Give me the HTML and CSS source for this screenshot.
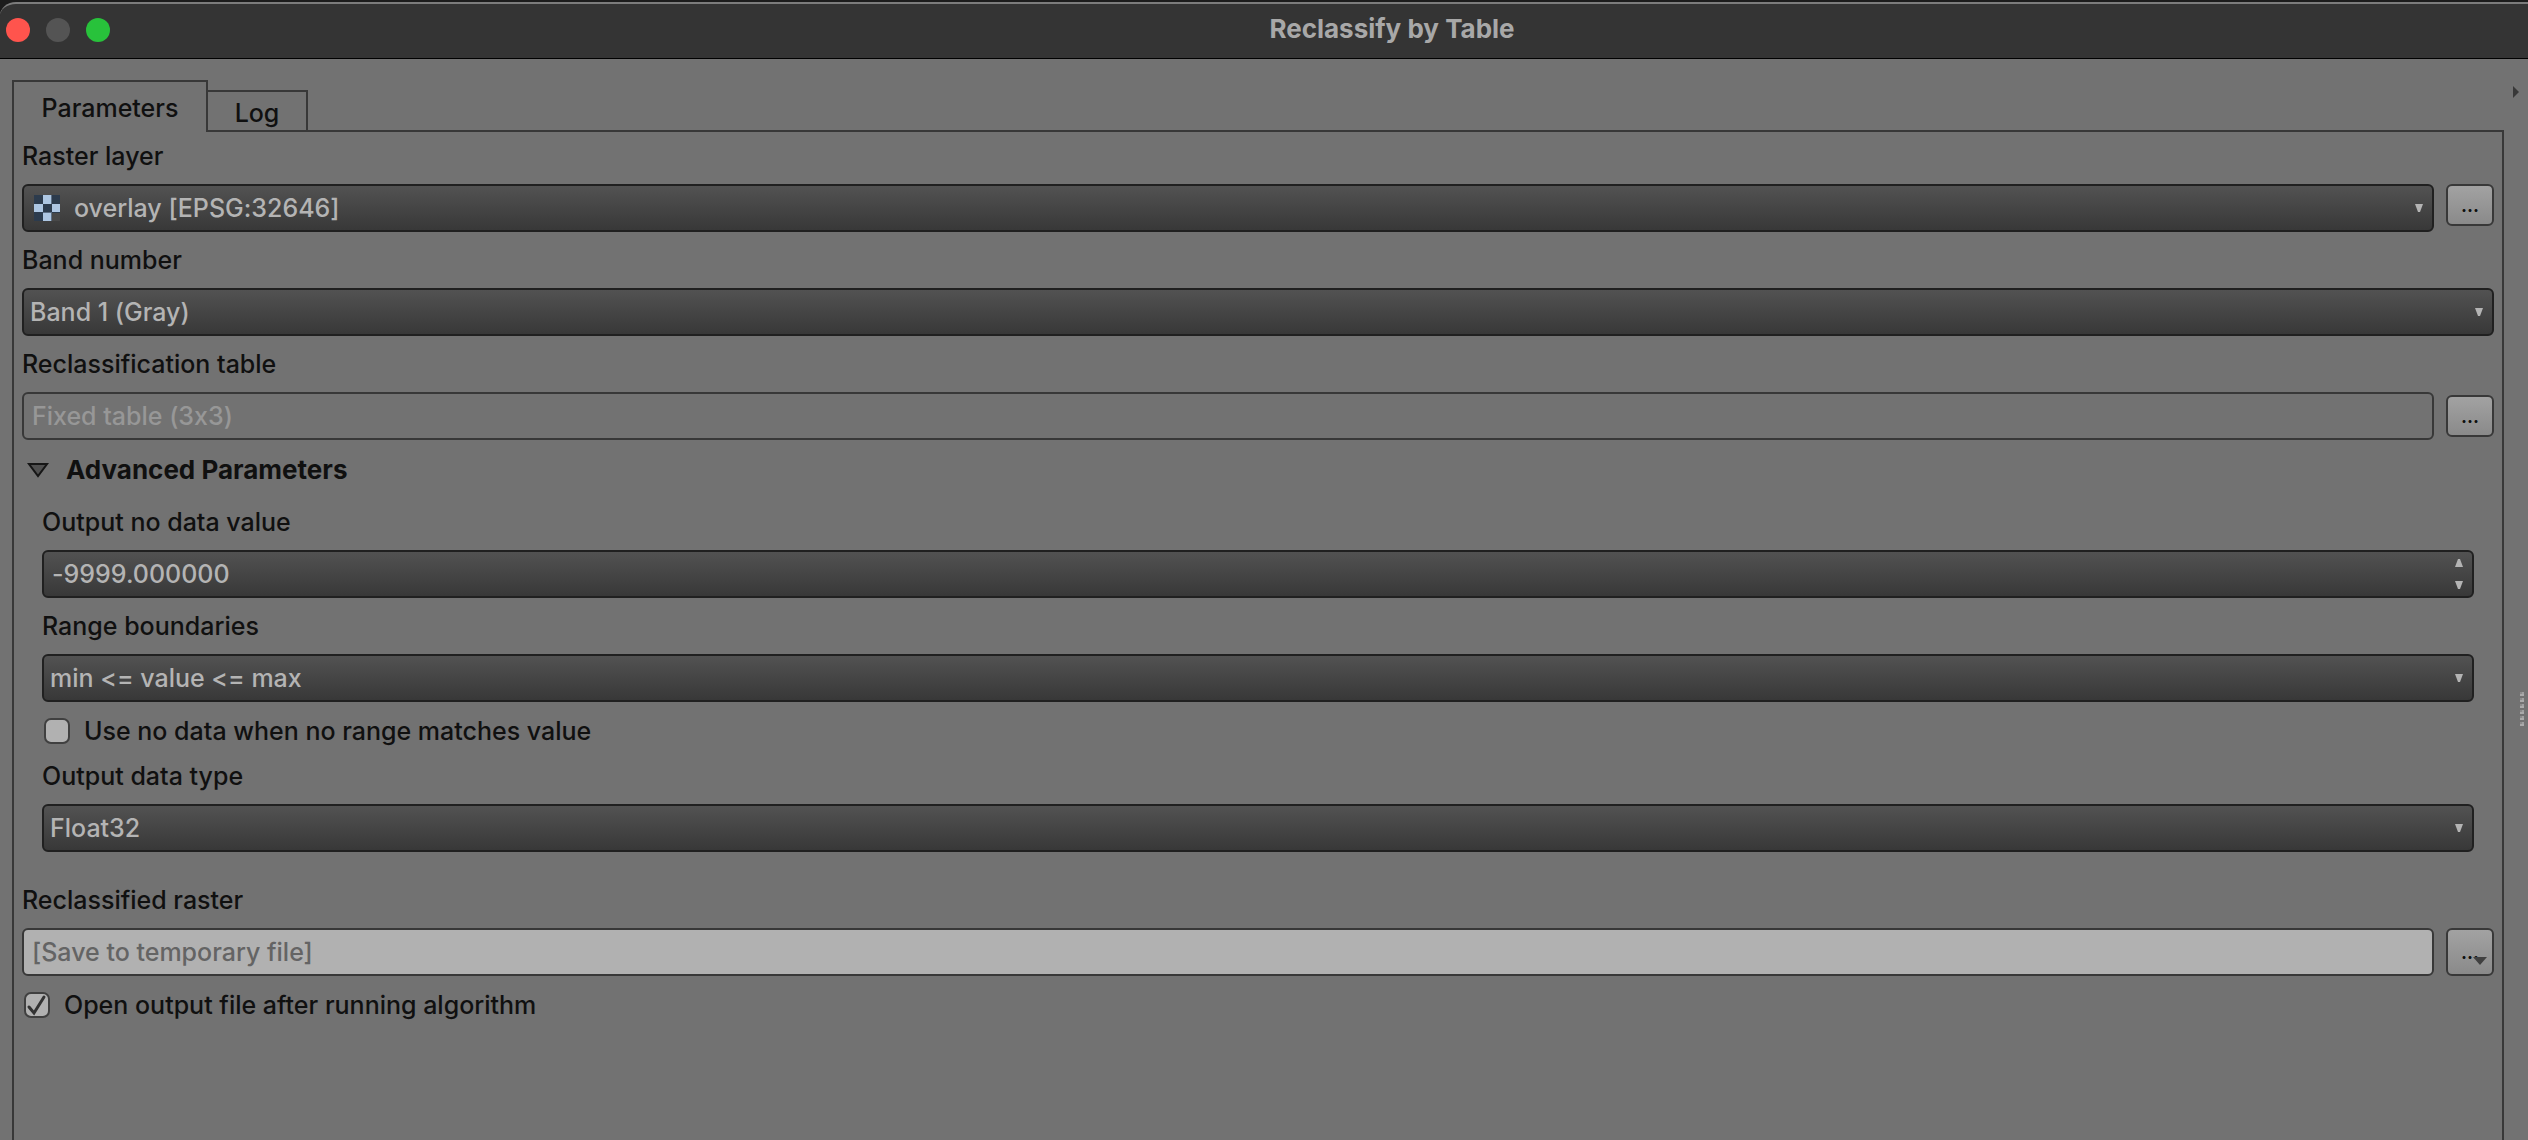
FILE: index.html
```html
<!DOCTYPE html>
<html lang="en">
<head>
<meta charset="utf-8">
<meta name="viewport" content="width=device-width, initial-scale=1">
<title>Reclassify by Table</title>
<link rel="stylesheet" href="styles.css">
</head>
<body>
<div class="window">
  <header class="titlebar">
    <div class="lights">
      <button class="light light-close" type="button" aria-label="Close"></button>
      <button class="light light-min" type="button" aria-label="Minimize" disabled></button>
      <button class="light light-zoom" type="button" aria-label="Zoom"></button>
    </div>
    <h1 class="title">Reclassify by Table</h1>
  </header>

  <div class="content">
    <main class="main">
      <div class="tabs" role="tablist">
        <button class="tab tab-active" type="button" role="tab" aria-selected="true">Parameters</button>
        <button class="tab" type="button" role="tab" aria-selected="false">Log</button>
      </div>

      <form class="pane">
        <label class="label" for="raster">Raster layer</label>
        <div class="row">
          <div class="combo">
            <svg class="raster-icon" width="26" height="26" viewBox="0 0 26 26" aria-hidden="true">
              <path fill="#2c3b4d" d="M0 0h26v26H0z"/>
              <path fill="#adc6e2" d="M9 0h8v9H9zM0 9h9v8H0zM18 9h8v8h-8zM9 18h8v8H9z"/>
              <path fill="#5d6f84" d="M17 0h1v9h-1zM17 17h1v9h-1zM9 17h9v1H9z"/>
              <path fill="#484848" d="M18 18h8v8h-8z"/>
            </svg>
            <select class="select select-icon" id="raster"><option>overlay [EPSG:32646]</option></select>
            <svg class="arrow" width="8" height="8" viewBox="0 0 8 8" aria-hidden="true"><path d="M0 0h8L5 8H3z"/></svg>
          </div>
          <button class="browse" type="button" aria-label="Browse raster layer">...</button>
        </div>

        <label class="label" for="band">Band number</label>
        <div class="combo">
          <select class="select" id="band"><option>Band 1 (Gray)</option></select>
          <svg class="arrow" width="8" height="8" viewBox="0 0 8 8" aria-hidden="true"><path d="M0 0h8L5 8H3z"/></svg>
        </div>

        <label class="label" for="table">Reclassification table</label>
        <div class="row row-center">
          <input class="field field-disabled" id="table" type="text" value="Fixed table (3x3)" disabled>
          <button class="browse" type="button" aria-label="Edit reclassification table">...</button>
        </div>

        <details class="advanced" open>
          <summary class="summary">
            <svg width="22" height="15" viewBox="0 0 22 15" aria-hidden="true"><path d="M2 1h18L11 13z" fill="#505050" stroke="#161616" stroke-width="2"/></svg>
            Advanced Parameters
          </summary>
          <div class="group">
            <label class="label" for="nodata">Output no data value</label>
            <div class="combo">
              <input class="spin" id="nodata" type="text" inputmode="decimal" value="-9999.000000">
              <div class="steps">
                <button class="step" type="button" aria-label="Increase"><svg class="arrow" width="8" height="8" viewBox="0 0 8 8"><path d="M0 8h8L5 0H3z"/></svg></button>
                <button class="step" type="button" aria-label="Decrease"><svg class="arrow" width="8" height="8" viewBox="0 0 8 8"><path d="M0 0h8L5 8H3z"/></svg></button>
              </div>
            </div>

            <label class="label" for="range">Range boundaries</label>
            <div class="combo">
              <select class="select" id="range"><option>min &lt;= value &lt;= max</option></select>
              <svg class="arrow" width="8" height="8" viewBox="0 0 8 8" aria-hidden="true"><path d="M0 0h8L5 8H3z"/></svg>
            </div>

            <div class="check">
              <input class="box" id="missing" type="checkbox">
              <label for="missing">Use no data when no range matches value</label>
            </div>

            <label class="label" for="dtype">Output data type</label>
            <div class="combo">
              <select class="select" id="dtype"><option>Float32</option></select>
              <svg class="arrow" width="8" height="8" viewBox="0 0 8 8" aria-hidden="true"><path d="M0 0h8L5 8H3z"/></svg>
            </div>
          </div>
        </details>

        <label class="label label-output" for="output">Reclassified raster</label>
        <div class="row">
          <input class="field" id="output" type="text" placeholder="[Save to temporary file]">
          <button class="browse browse-menu" type="button" aria-label="Choose output">...<svg class="menu-arrow" width="14" height="8" viewBox="0 0 14 8" aria-hidden="true"><path d="M0 0h14L7 8z"/></svg></button>
        </div>

        <div class="check">
          <input class="box" id="open" type="checkbox" checked>
          <label for="open">Open output file after running algorithm</label>
        </div>
      </form>
    </main>

    <aside class="splitter">
      <button class="collapse" type="button" aria-label="Show help"><svg width="6" height="12" viewBox="0 0 6 12"><path d="M0 0l6 6-6 6z"/></svg></button>
      <div class="grip"><i></i><i></i><i></i><i></i><i></i><i></i></div>
    </aside>
  </div>
</div>
</body>
</html>
```
FILE: styles.css
```css
* { box-sizing: border-box; }

body {
  margin: 0;
  background: #1c1c1c;
  color: #101010;
  font: 500 25px/32px Inter, "Liberation Sans", sans-serif;
  font-feature-settings: "calt" 0;
}

button, input, select {
  margin: 0;
  padding: 0;
  border: 0;
  background: none;
  color: inherit;
  font: inherit;
  font-feature-settings: inherit;
}

svg { display: block; flex: none; }

.window {
  display: flex;
  flex-direction: column;
  min-height: 100vh;
  padding-top: 2px;
}

.titlebar {
  display: flex;
  align-items: center;
  height: 57px;
  padding: 0 0 2px 6px;
  border-top: 2px solid #7c7c7c;
  border-bottom: 1px solid #000;
  border-top-left-radius: 16px 14px;
  background: #343434;
}

.lights { display: flex; gap: 16px; }
.light { width: 24px; height: 24px; border-radius: 50%; }
.light-close { background: #ff544d; }
.light-min { background: #545454; }
.light-zoom { background: #28c23b; }

.title {
  flex: 1;
  margin: 0;
  padding: 0 0 2px 146px;
  color: #a8a8a8;
  font-size: 26px;
  font-weight: 700;
  line-height: 32px;
  text-align: center;
}

.content {
  display: flex;
  flex: 1;
  padding: 21px 0 0 12px;
  background: #727272;
}

.main { display: flex; flex: 1; flex-direction: column; min-width: 0; }

.tabs { display: flex; align-items: flex-end; }

.tab {
  min-width: 100px;
  height: 40px;
  padding: 4px 16px 0;
  border: 2px solid #383838;
  border-bottom: 0;
  border-left: 0;
}

.tab-active {
  position: relative;
  min-width: 196px;
  height: 52px;
  margin-bottom: -2px;
  padding-top: 2px;
  border-left: 2px solid #383838;
  background: #727272;
}

.pane {
  display: flex;
  flex: 1;
  flex-direction: column;
  gap: 12px;
  padding: 8px 8px 24px;
  border: 2px solid #383838;
  border-bottom: 0;
}

.label { align-self: flex-start; height: 32px; }
.label-output { margin-top: 20px; }

.row { display: flex; align-items: flex-start; gap: 12px; }
.row-center { align-items: center; }

.combo {
  display: flex;
  flex: 1;
  align-items: center;
  min-width: 0;
  height: 48px;
  padding: 0 9px 0 6px;
  border: 2px solid #202020;
  border-radius: 6px;
  background: linear-gradient(#525252, #383838);
  color: #b4b4b4;
}

.pane > .combo, .group > .combo { flex: none; }

.select { flex: 1; min-width: 0; height: 44px; appearance: none; outline: 0; }
.select-icon { padding-left: 14px; }
.raster-icon { margin-left: 4px; }
.arrow { fill: #b4b4b4; }

.spin { flex: 1; min-width: 0; height: 44px; padding-left: 2px; outline: 0; }
.steps { display: flex; flex-direction: column; gap: 14px; }
.step { display: block; height: 8px; }

.field {
  flex: 1;
  min-width: 0;
  height: 48px;
  padding: 0 8px;
  border: 2px solid #383838;
  border-radius: 6px;
  background: #b1b1b1;
}

.field::placeholder { color: #646464; opacity: 1; }
.field-disabled { background: none; color: #979797; }

.browse {
  width: 48px;
  height: 42px;
  padding-top: 2px;
  border: 2px solid #383838;
  border-radius: 6px;
  background: linear-gradient(#a2a2a2, #8a8a8a);
  font-size: 18px;
  font-weight: 700;
}

.browse-menu { position: relative; height: 48px; }
.menu-arrow { position: absolute; right: 5px; bottom: 9px; fill: #404040; }

.summary {
  display: flex;
  align-items: center;
  gap: 17px;
  height: 36px;
  padding-left: 5px;
  font-size: 26px;
  font-weight: 700;
  list-style: none;
}

.group {
  display: flex;
  flex-direction: column;
  gap: 12px;
  padding: 18px 20px 0;
}

.check { display: flex; align-items: center; gap: 14px; height: 34px; padding-left: 2px; }

.box {
  width: 26px;
  height: 26px;
  border: 2px solid #404040;
  border-radius: 7px;
  background: #b1b1b1;
  appearance: none;
}

.box:checked {
  background: #b1b1b1 url("data:image/svg+xml,%3Csvg xmlns='http://www.w3.org/2000/svg' viewBox='0 0 22 22'%3E%3Cpath d='M3 13l5 6L18 3' fill='none' stroke='%23333' stroke-width='3' stroke-linecap='round'/%3E%3C/svg%3E") center / 22px 22px no-repeat;
}

.splitter {
  display: flex;
  flex-direction: column;
  gap: 594px;
  width: 24px;
  padding: 6px 4px 0 9px;
}

.collapse { align-self: flex-start; height: 12px; fill: #383838; }
.grip { display: flex; flex-direction: column; align-self: flex-end; gap: 2px; }
.grip i { width: 4px; height: 4px; background: linear-gradient(#a0a0a0, #a0a0a0) 2px 0 / 2px 2px no-repeat, linear-gradient(#aaa, #aaa) 0 2px / 4px 2px no-repeat, #8c8c8c; }
```
